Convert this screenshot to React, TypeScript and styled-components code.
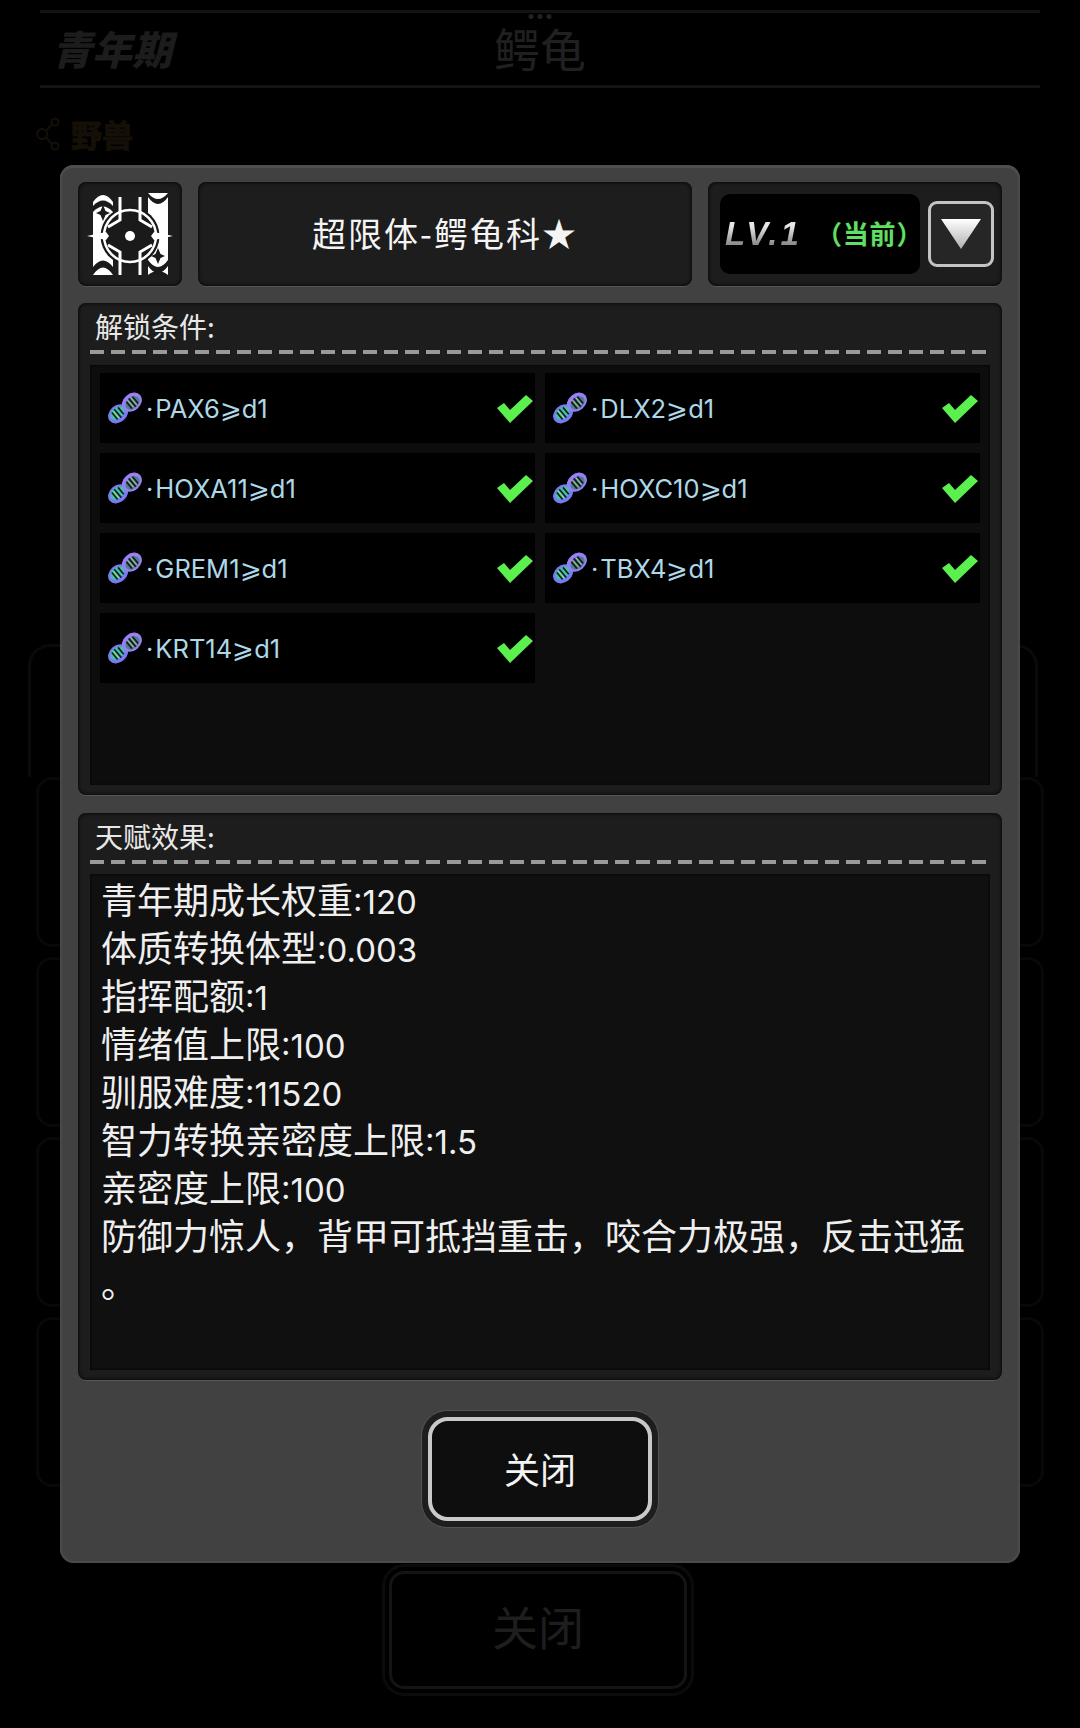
import React from 'react';
import styled, { createGlobalStyle } from 'styled-components';

const GlobalStyle = createGlobalStyle`
  html, body {
    margin: 0;
    padding: 0;
    background: #000;
  }
  * {
    box-sizing: border-box;
  }
`;

const FONT = `"Noto Sans CJK SC", "Noto Sans", sans-serif`;
const LATIN = `Inter, "Noto Sans CJK SC", sans-serif`;

const Page = styled.div`
  position: relative;
  width: 1080px;
  height: 1728px;
  overflow: hidden;
  background: #000;
  font-family: ${FONT};
  display: flex;
  flex-direction: column;
  align-items: center;
`;

/* dimmed page behind the dialog */
const BackHeader = styled.div`
  position: relative;
  width: 1000px;
  height: 78px;
  margin-top: 10px;
  border-top: 3px solid #131313;
  border-bottom: 3px solid #131313;
  display: grid;
  grid-template-columns: 1fr auto 1fr;
  align-items: center;
`;

const BackStage = styled.div`
  padding-left: 12px;
  margin-bottom: 3px;
  font-size: 40px;
  font-weight: 900;
  font-style: italic;
  color: #1c1c1c;
`;

const BackTitle = styled.div`
  font-size: 46px;
  line-height: 60px;
  margin-bottom: 4px;
  color: #202020;
`;

const BackDots = styled.div`
  position: absolute;
  left: 50%;
  top: 1px;
  transform: translateX(-50%);
  display: flex;
  gap: 4px;
`;

const BackDot = styled.span`
  width: 5px;
  height: 5px;
  border-radius: 50%;
  background: #222;
`;

const BackTag = styled.div`
  align-self: flex-start;
  display: flex;
  align-items: center;
  gap: 9px;
  margin: 24px 0 0 34px;
  font-size: 31px;
  font-weight: 700;
  line-height: 44px;
  color: #150f08;
  -webkit-text-stroke: 1px #150f08;
`;

const BackFrame = styled.div`
  align-self: flex-start;
  width: 1010px;
  height: 133px;
  margin: 488px 0 0 28px;
  border: 3px solid #0a0a0a;
  border-bottom: none;
  border-radius: 22px 22px 0 0;
`;

const BackCards = styled.div`
  display: flex;
  flex-direction: column;
  gap: 10px;
  width: 1008px;
`;

const BackCard = styled.div`
  height: 170px;
  border: 3px solid #080808;
  border-radius: 16px;
`;

const BackButton = styled.div`
  position: absolute;
  left: 382px;
  top: 1564px;
  width: 312px;
  height: 132px;
  padding-bottom: 10px;
  border: 3px solid #0b0b0b;
  border-radius: 22px;
  display: flex;
  align-items: center;
  justify-content: center;
  font-size: 46px;
  color: #1e1e1e;
  box-shadow: inset 0 0 0 4px #000, inset 0 0 0 7px #141414;
`;

/* dialog */
const Dialog = styled.div`
  position: absolute;
  left: 60px;
  top: 165px;
  width: 960px;
  height: 1398px;
  padding: 17px 18px 0;
  background: #414141;
  border-radius: 14px;
  box-shadow: inset 0 3px 0 #4e4e4e, inset 0 0 0 2px #4a4a4a;
  display: flex;
  flex-direction: column;
  color: #f2f2f2;
`;

const TopRow = styled.div`
  display: flex;
  gap: 16px;
  height: 104px;
`;

const Tile = styled.div<{ $width?: number }>`
  ${({ $width }) => ($width ? `flex: 0 0 ${$width}px;` : 'flex: 1;')}
  background: #1d1d1d;
  border-radius: 8px;
  box-shadow: inset 0 0 4px #000, 0 1px 0 #555;
  display: flex;
  align-items: center;
  justify-content: center;
`;

const Name = styled.div`
  margin-bottom: 4px;
  font-size: 34px;
  letter-spacing: 2px;
  color: #f4f4f4;
`;

const LevelTile = styled(Tile)`
  justify-content: flex-start;
  gap: 8px;
  padding-left: 12px;
`;

const LevelPill = styled.div`
  width: 200px;
  height: 80px;
  background: #000;
  border-radius: 10px;
  display: flex;
  align-items: center;
  padding-left: 5px;
`;

const LevelText = styled.span`
  flex: 0 0 91px;
  font-family: "Liberation Sans", sans-serif;
  font-size: 33px;
  font-weight: 700;
  font-style: italic;
  letter-spacing: 3px;
  background: linear-gradient(#e6e6e6 30%, #8f8f8f 75%);
  -webkit-background-clip: text;
  background-clip: text;
  color: transparent;
`;

const Current = styled.span`
  margin-bottom: 3px;
  font-size: 26px;
  font-weight: 700;
  letter-spacing: 0.8px;
  color: #5fe063;
  white-space: nowrap;
`;

const DropButton = styled.div`
  width: 66px;
  height: 66px;
  border: 3px solid #c4c4c4;
  border-radius: 9px;
  background: #262626;
  display: flex;
  align-items: center;
  justify-content: center;
`;

const Section = styled.div<{ $height: number; $top: number }>`
  height: ${({ $height }) => $height}px;
  margin-top: ${({ $top }) => $top}px;
  padding: 0 12px 10px;
  background: #1d1d1d;
  border-radius: 8px;
  box-shadow: inset 0 0 4px #000, 0 1px 0 #555;
  display: flex;
  flex-direction: column;
`;

const SectionLabel = styled.div`
  height: 47px;
  padding: 3px 0 0 5px;
  font-size: 28px;
  line-height: 40px;
  color: #e8e8e8;
`;

const Dashes = styled.div`
  flex: 0 0 4px;
  background: repeating-linear-gradient(90deg, #9a9a9a 0 14px, transparent 14px 21px);
`;

const ConditionPanel = styled.div`
  flex: 1;
  margin-top: 11px;
  padding: 8px 10px;
  background: #0d0d0d;
  display: grid;
  grid-template-columns: 1fr 1fr;
  grid-auto-rows: 70px;
  gap: 10px;
  align-content: start;
  box-shadow: inset 0 0 3px #000;
`;

const Condition = styled.div`
  background: #000;
  display: flex;
  align-items: center;
  padding-left: 7px;
  font-family: ${LATIN};
  font-size: 25.5px;
  color: #aed8e8;
`;

const ConditionName = styled.span`
  flex: 1;
  margin-left: 3px;
`;

const GeneDot = styled.span`
  margin-right: 2px;
`;

const CheckMark = styled.svg`
  width: 36px;
  height: 28px;
  margin: 2px 2px 0 0;
`;

const EffectPanel = styled.div`
  flex: 1;
  margin-top: 10px;
  padding: 0 11px;
  background: #101010;
  font-size: 36px;
  color: #efefef;
  box-shadow: inset 0 0 3px #000;
`;

const EffectLine = styled.div`
  height: 48px;
  line-height: 48px;
  white-space: nowrap;
`;

const EffectValue = styled.span`
  font-family: ${LATIN};
  font-size: 33px;
`;

const CloseRow = styled.div`
  flex: 1;
  display: flex;
  justify-content: center;
  padding-top: 30px;
`;

const CloseOuter = styled.div`
  width: 238px;
  height: 118px;
  padding: 6px;
  background: #1e1e1e;
  border: 1px solid #555;
  border-radius: 26px;
`;

const CloseButton = styled.div`
  height: 100%;
  padding-bottom: 3px;
  background: #0e0e0e;
  border: 4px solid #c9c9c9;
  border-radius: 20px;
  display: flex;
  align-items: center;
  justify-content: center;
  font-size: 36px;
  color: #f4f4f4;
`;

const conditions = ['PAX6', 'DLX2', 'HOXA11', 'HOXC10', 'GREM1', 'TBX4', 'KRT14'];

const effects = [
  { label: '青年期成长权重', value: ':120' },
  { label: '体质转换体型', value: ':0.003' },
  { label: '指挥配额', value: ':1' },
  { label: '情绪值上限', value: ':100' },
  { label: '驯服难度', value: ':11520' },
  { label: '智力转换亲密度上限', value: ':1.5' },
  { label: '亲密度上限', value: ':100' },
  { label: '防御力惊人，背甲可抵挡重击，咬合力极强，反击迅猛', value: '' },
  { label: '。', value: '' },
];

const DnaIcon: React.FC = () => (
  <svg width="36" height="34" viewBox="0 0 36 34">
    <g transform="rotate(-40 18 17)">
      <ellipse cx="9" cy="17" rx="11" ry="8.5" fill="#7a78f2" />
      <ellipse cx="27" cy="17" rx="11" ry="8.5" fill="#9c7ef4" />
      <ellipse cx="9" cy="16" rx="8" ry="5.5" fill="#46c0a6" />
      <ellipse cx="27" cy="18" rx="8" ry="5.5" fill="#4c7f90" />
      <path d="M5 12v9M9 11v11M13 12v9" stroke="#0e1c26" strokeWidth="1.6" />
      <path d="M23 13v9M27 12v11M31 13v9" stroke="#121a28" strokeWidth="1.6" />
      <path d="M7 12v9M25 13v9M29 13v9" stroke="#d8d860" strokeWidth="0.8" />
    </g>
  </svg>
);

const Emblem: React.FC = () => (
  <svg width="104" height="104" viewBox="0 0 104 104">
    <path d="M15 20Q25 6 35 20V93H15Z" fill="#fff" />
    <path d="M70 11H90V93H70Z" fill="#fff" />
    <path d="M15 24Q25 13 35 24V30Q25 19 15 30Z" fill="#1a1a1a" />
    <path d="M15 93Q25 78 35 93V85Q25 72 15 85Z" fill="#1a1a1a" />
    <path d="M70 11Q80 23 90 11V15Q80 29 70 15Z" fill="#1a1a1a" />
    <path d="M70 78Q80 92 90 78V84Q80 98 70 84Z" fill="#1a1a1a" />
    <path d="M70 93Q80 85 90 93Z" fill="#1a1a1a" />
    <circle cx="52" cy="54" r="29.5" fill="#1a1a1a" />
    <circle cx="52" cy="54" r="26" fill="none" stroke="#fff" strokeWidth="2.5" />
    <path d="M42 15V38L30 45M62 15V38L74 45" fill="none" stroke="#fff" strokeWidth="3" />
    <path d="M42 93V70L30 63M62 93V70L74 63" fill="none" stroke="#fff" strokeWidth="3" />
    <path d="M52 67Q38 65 27 54Q38 43 52 41Q66 43 77 54Q66 65 52 67Z" fill="#1a1a1a" />
    <path d="M9 54L28 50L31 54L28 58ZM95 54L76 50L73 54L76 58Z" fill="#fff" />
    <circle cx="52" cy="54" r="5" fill="#fff" />
    <path d="M25 23L27.5 29L32 31L27.5 33L25 39L22.5 33L18 31L22.5 29Z" fill="#1a1a1a" />
    <path d="M80 66L82.5 72L87 74L82.5 76L80 82L77.5 76L73 74L77.5 72Z" fill="#1a1a1a" />
  </svg>
);

const App: React.FC = () => (
  <Page>
    <GlobalStyle />
    <BackHeader>
      <BackDots>
        <BackDot />
        <BackDot />
        <BackDot />
      </BackDots>
      <BackStage>青年期</BackStage>
      <BackTitle>鳄龟</BackTitle>
    </BackHeader>
    <BackTag>
      <svg width="28" height="34" viewBox="0 0 28 34" fill="none" stroke="#150f08" strokeWidth="2">
        <circle cx="8" cy="17" r="5" />
        <circle cx="21" cy="5" r="3.5" />
        <circle cx="21" cy="29" r="3.5" />
        <path d="M12 14L18 7M12 20L18 27" />
      </svg>
      野兽
    </BackTag>
    <BackFrame />
    <BackCards>
      <BackCard />
      <BackCard />
      <BackCard />
      <BackCard />
    </BackCards>
    <BackButton>关闭</BackButton>

    <Dialog>
      <TopRow>
        <Tile $width={104}>
          <Emblem />
        </Tile>
        <Tile>
          <Name>超限体-鳄龟科★</Name>
        </Tile>
        <LevelTile $width={294}>
          <LevelPill>
            <LevelText>LV.1</LevelText>
            <Current>（当前）</Current>
          </LevelPill>
          <DropButton>
            <svg width="42" height="32" viewBox="0 0 42 32">
              <defs>
                <linearGradient id="drop" x1="0" y1="0" x2="0" y2="1">
                  <stop offset="0" stopColor="#fff" />
                  <stop offset="1" stopColor="#b0b0b0" />
                </linearGradient>
              </defs>
              <path d="M1 1H41L21 31Z" fill="url(#drop)" />
            </svg>
          </DropButton>
        </LevelTile>
      </TopRow>

      <Section $height={492} $top={17}>
        <SectionLabel>解锁条件:</SectionLabel>
        <Dashes />
        <ConditionPanel>
          {conditions.map((gene) => (
            <Condition key={gene}>
              <DnaIcon />
              <ConditionName>
                <GeneDot>·</GeneDot>
                {gene}⩾d1
              </ConditionName>
              <CheckMark viewBox="0 0 36 28">
                <path d="M0 13L7 8L13 15L29 0L36 6L13 28Z" fill="#5cf04e" />
              </CheckMark>
            </Condition>
          ))}
        </ConditionPanel>
      </Section>

      <Section $height={567} $top={18}>
        <SectionLabel>天赋效果:</SectionLabel>
        <Dashes />
        <EffectPanel>
          {effects.map(({ label, value }) => (
            <EffectLine key={label}>
              {label}
              <EffectValue>{value}</EffectValue>
            </EffectLine>
          ))}
        </EffectPanel>
      </Section>

      <CloseRow>
        <CloseOuter>
          <CloseButton>关闭</CloseButton>
        </CloseOuter>
      </CloseRow>
    </Dialog>
  </Page>
);

export default App;
